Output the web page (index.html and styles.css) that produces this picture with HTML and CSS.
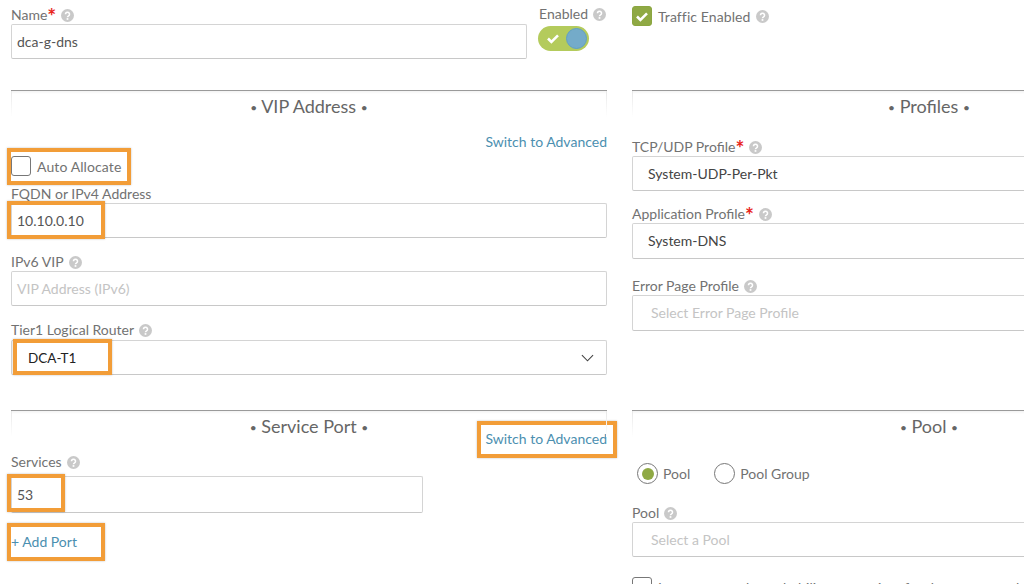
FILE: index.html
```html
<!DOCTYPE html>
<html lang="en">
<head>
<meta charset="utf-8">
<title>Virtual Service</title>
<link rel="stylesheet" href="styles.css">
</head>
<body>
<svg class="defs" width="0" height="0" aria-hidden="true">
  <symbol id="help" viewBox="0 0 12 12">
    <circle cx="6" cy="6" r="6" fill="#c9c9c9"/>
    <path d="M4.1 4.8a1.9 1.8 0 1 1 2.9 1.5c-.7.4-1 .7-1 1.4" fill="none" stroke="#fff" stroke-width="1.4"/>
    <rect x="5.2" y="8.4" width="1.6" height="1.6" fill="#fff"/>
  </symbol>
</svg>
<main class="page">
  <section class="col col-left">
    <div class="top-row">
      <div class="name-field">
        <div class="label">Name<span class="req">*</span><svg class="help"><use href="#help"/></svg></div>
        <div class="input value-dark">dca-g-dns</div>
      </div>
      <div class="enabled">
        <div class="label">Enabled<svg class="help"><use href="#help"/></svg></div>
        <div class="switch">
          <svg class="switch-check" viewBox="0 0 14 11"><path d="M2 5.5l3.4 3.4L12 2.4" fill="none" stroke="#fff" stroke-width="2.6"/></svg>
          <span class="knob"></span>
        </div>
      </div>
    </div>
    <div class="section-head vip-head"><h2><span class="bullet">•</span> VIP Address <span class="bullet">•</span></h2></div>
    <div class="switch-row"><a class="link">Switch to Advanced</a></div>
    <div class="auto-row">
      <span class="box"></span><span class="check-text">Auto Allocate</span>
      <span class="mark mark-auto"></span>
    </div>
    <div class="field field-fqdn">
      <div class="label">FQDN or IPv4 Address</div>
      <div class="input value-dark">10.10.0.10</div>
      <span class="mark mark-ip"></span>
    </div>
    <div class="field field-ipv6">
      <div class="label">IPv6 VIP<svg class="help"><use href="#help"/></svg></div>
      <div class="input placeholder">VIP Address (IPv6)</div>
    </div>
    <div class="field field-tier">
      <div class="label">Tier1 Logical Router<svg class="help"><use href="#help"/></svg></div>
      <div class="input select value-black">
        <span>DCA-T1</span>
        <svg class="chevron" viewBox="0 0 14 8"><path d="M1 1l6 6 6-6" fill="none" stroke="#444" stroke-width="1.2"/></svg>
      </div>
      <span class="mark mark-tier"></span>
    </div>
    <div class="section-head port-head">
      <h2><span class="bullet">•</span> Service Port <span class="bullet">•</span></h2>
      <a class="link port-link">Switch to Advanced</a>
      <span class="mark mark-switch"></span>
    </div>
    <div class="field field-services">
      <div class="label">Services<svg class="help"><use href="#help"/></svg></div>
      <div class="input value-dark services-input">53</div>
      <span class="mark mark-53"></span>
    </div>
    <div class="add-row">
      <a class="link add-link">+ Add Port</a>
      <span class="mark mark-add"></span>
    </div>
  </section>

  <section class="col col-right">
    <div class="traffic">
      <span class="box box-on"><svg viewBox="0 0 14 11"><path d="M2 5.5l3.4 3.4L12 2.4" fill="none" stroke="#fff" stroke-width="2.6"/></svg></span>
      <span class="check-text">Traffic Enabled</span><svg class="help"><use href="#help"/></svg>
    </div>
    <div class="section-head profiles-head"><h2><span class="bullet">•</span> Profiles <span class="bullet">•</span></h2></div>
    <div class="field field-tcp">
      <div class="label">TCP/UDP Profile<span class="req">*</span><svg class="help"><use href="#help"/></svg></div>
      <div class="input select-value">System-UDP-Per-Pkt</div>
    </div>
    <div class="field field-app">
      <div class="label">Application Profile<span class="req">*</span><svg class="help"><use href="#help"/></svg></div>
      <div class="input select-value">System-DNS</div>
    </div>
    <div class="field field-error">
      <div class="label">Error Page Profile<svg class="help"><use href="#help"/></svg></div>
      <div class="input select-placeholder">Select Error Page Profile</div>
    </div>
    <div class="section-head pool-head"><h2><span class="bullet">•</span> Pool <span class="bullet">•</span></h2></div>
    <div class="radios">
      <span class="radio radio-on"><span class="dot"></span></span><span class="radio-text radio-text-first">Pool</span>
      <span class="radio"></span><span class="radio-text">Pool Group</span>
    </div>
    <div class="field field-pool">
      <div class="label">Pool<svg class="help"><use href="#help"/></svg></div>
      <div class="input select-placeholder">Select a Pool</div>
    </div>
    <div class="ignore-row">
      <span class="box"></span><span class="check-text">Ignore network reachability constraints for the server pool</span>
    </div>
  </section>
</main>
</body>
</html>
```

FILE: styles.css
```css
* { box-sizing: border-box; }
html, body { margin: 0; height: 584px; overflow: hidden; background: #fff; }
body { font-family: Lato, "Open Sans", sans-serif; font-size: 14px; color: #666; }
.defs { position: absolute; }
.page { display: grid; grid-template-columns: 596px 594px; column-gap: 25px; padding-left: 11px; width: 1300px; height: 584px; overflow: hidden; }
.col { min-width: 0; }
.col-left { position: relative; }
.top-row { display: flex; gap: 12px; height: 90px; padding-top: 6px; }
.name-field { width: 516px; }
.enabled { flex: 1; margin-top: -1px; }
.label { height: 18px; line-height: 18px; color: #727272; white-space: nowrap; display: flex; align-items: center; }
.req { color: #e8261c; font-size: 21px; line-height: 20px; font-weight: 700; height: 18px; margin-left: 0; }
.help { width: 13px; height: 13px; margin-left: 5px; flex: none; }
.input { height: 35px; border: 1px solid #d4d4d4; border-bottom-color: #c8c8c8; border-radius: 2px; display: flex; align-items: center; padding-left: 5px; background: #fff; white-space: nowrap; }
.value-dark { color: #555; font-size: 14px; }
.value-black { color: #222; font-size: 13.5px; padding-left: 16px; justify-content: space-between; padding-right: 12px; }
.chevron { width: 13px; height: 8px; flex: none; }
.placeholder { color: #c4c4c4; }
.select-value { color: #444; padding-left: 15px; padding-bottom: 1px; }
.select-placeholder { color: #c4c4c4; padding-left: 18px; padding-bottom: 1px; }
.switch { width: 51px; height: 25px; margin-top: 3px; margin-left: -1px; border-radius: 13px; background: #b4cb5c; position: relative; display: flex; align-items: center; padding-left: 8px; }
.switch-check { width: 14px; height: 11px; }
.knob { position: absolute; right: 2px; top: 2px; width: 21px; height: 21px; border-radius: 50%; background: #74abc9; border: 1px solid #5f9fc6; }
.section-head { position: relative; height: 27px; border-top: 1px solid #9a9a9a; text-align: center; background: linear-gradient(#f3f3f3 0, #fff 3px); }
.section-head::before, .section-head::after { content: ""; position: absolute; top: 0; bottom: 0; width: 1px; background: linear-gradient(#e8e8e8, #fff); }
.section-head::before { left: 0; }
.section-head::after { right: 0; }
.section-head h2 { margin: 0; font-size: 18px; font-weight: 400; line-height: 31px; color: #666; }
.bullet { font-size: 12px; vertical-align: 1px; }
.switch-row { display: flex; justify-content: flex-end; height: 39px; padding-top: 15px; }
.link { color: #4b8fb0; white-space: nowrap; font-size: 14px; }
.switch-row .link { line-height: 20px; }
.auto-row { position: relative; display: flex; align-items: center; height: 20px; }
.box { width: 20px; height: 20px; border: 1px solid #777; border-radius: 3px; flex: none; display: inline-flex; align-items: center; justify-content: center; background: #fff; }
.check-text { margin-left: 6px; color: #727272; white-space: nowrap; letter-spacing: 0.1px; }
.field { position: relative; }
.field-fqdn { margin-top: 9px; }
.field-ipv6 { margin-top: 15px; }
.field-tier { margin-top: 15px; }
.field-tier .label { margin-bottom: 1px; }
.port-head { margin-top: 35px; }
.port-head .port-link { position: absolute; right: 0; top: 18px; line-height: 20px; }
.field-services { margin-top: 16px; }
.field-services .label { margin-bottom: 5px; }
.services-input { width: 412px; height: 37px; }
.add-row { position: relative; margin-top: 19px; height: 20px; line-height: 20px; }
.add-link { display: inline-block; }
.mark { position: absolute; border: 4px solid #f29d38; pointer-events: none; box-shadow: 0 0 2px rgba(0,0,0,.25); }
.mark-auto { left: -4px; top: -8px; width: 124px; height: 37px; }
.mark-ip { left: -4px; top: 16px; width: 98px; height: 38px; }
.mark-tier { left: 2px; top: 18px; width: 99px; height: 36px; }
.mark-switch { right: -10px; top: 10px; width: 140px; height: 37px; }
.mark-53 { left: -4px; top: 21px; width: 58px; height: 38px; }
.mark-add { left: -4px; top: -9px; width: 98px; height: 38px; }
.traffic { display: flex; align-items: center; height: 90px; padding-bottom: 58px; }
.box-on { border: 1px solid #8ba640; background: #8fa944; }
.box-on svg { width: 14px; height: 11px; }
.profiles-head { margin-bottom: 21px; }
.field-app { margin-top: 14px; }
.field-app .input { height: 36px; }
.field-error { margin-top: 18px; }
.field-error .input { height: 36px; }
.pool-head { margin-top: 79px; }
.radios { display: flex; align-items: center; margin-top: 26px; height: 21px; }
.radio { width: 21px; height: 21px; border: 1px solid #777; border-radius: 50%; display: inline-flex; align-items: center; justify-content: center; flex: none; margin-left: 5px; }
.dot { width: 12px; height: 12px; border-radius: 50%; background: #8fa944; }
.radio-text { margin-left: 5px; color: #727272; font-size: 14px; }
.radio-text-first { margin-right: 19px; }
.field-pool { margin-top: 20px; }
.ignore-row { display: flex; align-items: center; height: 20px; margin-top: 20px; }
```
